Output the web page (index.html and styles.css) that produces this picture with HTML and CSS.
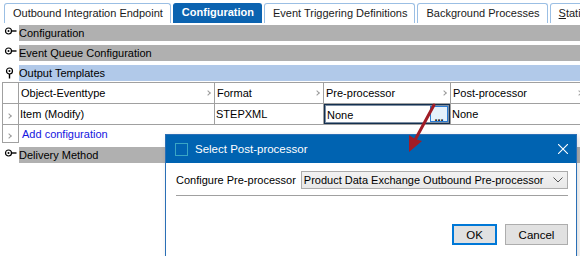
FILE: index.html
```html
<!DOCTYPE html>
<html lang="en">
<head>
    <meta charset="UTF-8">
    <title>Outbound Integration Endpoint - Configuration</title>
    <link rel="stylesheet" href="styles.css">
</head>
<body>
    <div class="tabs">
        <div class="tab">Outbound Integration Endpoint</div>
        <div class="tab active">Configuration</div>
        <div class="tab">Event Triggering Definitions</div>
        <div class="tab">Background Processes</div>
        <div class="tab"><u>S</u>tatis</div>
    </div>

    <div class="sections">
        <div class="section">
            <svg class="pin" width="19" height="16" viewBox="0 0 19 16"><circle cx="8.5" cy="6" r="3" fill="none" stroke="#000" stroke-width="1.2"/><circle cx="8.5" cy="6" r="1" fill="#000"/><line x1="11.5" y1="6" x2="16.5" y2="6" stroke="#000" stroke-width="1.4"/></svg>
            <div class="bar">Configuration</div>
        </div>
        <div class="section">
            <svg class="pin" width="19" height="16" viewBox="0 0 19 16"><circle cx="8.5" cy="6" r="3" fill="none" stroke="#000" stroke-width="1.2"/><circle cx="8.5" cy="6" r="1" fill="#000"/><line x1="11.5" y1="6" x2="16.5" y2="6" stroke="#000" stroke-width="1.4"/></svg>
            <div class="bar">Event Queue Configuration</div>
        </div>
        <div class="section open">
            <svg class="pin" width="19" height="16" viewBox="0 0 19 16"><circle cx="9.5" cy="6" r="3" fill="none" stroke="#000" stroke-width="1.2"/><circle cx="9.5" cy="6" r="1" fill="#000"/><line x1="9.5" y1="9" x2="9.5" y2="13.5" stroke="#000" stroke-width="1.4"/></svg>
            <div class="bar">Output Templates</div>
        </div>

        <table class="grid">
            <colgroup>
                <col style="width:16px">
                <col style="width:196px">
                <col style="width:109px">
                <col style="width:127px">
                <col>
            </colgroup>
            <tr class="head">
                <th></th>
                <th><div class="cell">Object-Eventtype<span class="chev"></span></div></th>
                <th><div class="cell">Format<span class="chev"></span></div></th>
                <th><div class="cell">Pre-processor<span class="chev"></span></div></th>
                <th><div class="cell">Post-processor<span class="chev"></span></div></th>
            </tr>
            <tr class="row">
                <td class="marker"><span class="chev"></span></td>
                <td>Item (Modify)</td>
                <td>STEPXML</td>
                <td class="editing">
                    <div class="editor">
                        <span>None</span>
                        <button class="dots">...</button>
                    </div>
                </td>
                <td>None</td>
            </tr>
            <tr class="add">
                <td class="marker"><span class="chev"></span></td>
                <td colspan="4"><a href="#" class="link">Add configuration</a></td>
            </tr>
        </table>

        <div class="section">
            <svg class="pin" width="19" height="16" viewBox="0 0 19 16"><circle cx="8.5" cy="6" r="3" fill="none" stroke="#000" stroke-width="1.2"/><circle cx="8.5" cy="6" r="1" fill="#000"/><line x1="11.5" y1="6" x2="16.5" y2="6" stroke="#000" stroke-width="1.4"/></svg>
            <div class="bar">Delivery Method</div>
        </div>
    </div>

    <div class="dialog">
        <div class="dialog-title">
            <span class="win-icon"></span>
            <span class="title-text">Select Post-processor</span>
            <svg class="close" width="10" height="10" viewBox="0 0 10 10"><path d="M0 0 L10 10 M10 0 L0 10" stroke="#fff" stroke-width="1.1"/></svg>
        </div>
        <div class="dialog-body">
            <div class="field">
                <label>Configure Pre-processor</label>
                <div class="combo">
                    <span class="combo-text">Product Data Exchange Outbound Pre-processor</span>
                    <svg class="combo-arrow" width="10" height="6" viewBox="0 0 10 6"><path d="M0.5 0.5 L5 5 L9.5 0.5" fill="none" stroke="#555" stroke-width="1"/></svg>
                </div>
            </div>
            <div class="separator"></div>
            <div class="buttons">
                <button class="btn default">OK</button>
                <button class="btn">Cancel</button>
            </div>
        </div>
    </div>

    <svg class="arrow" width="40" height="56" viewBox="0 0 40 56">
        <line x1="34" y1="5" x2="15" y2="40" stroke="#a01c26" stroke-width="3" stroke-linecap="round"/>
        <polygon points="9,52 9,35 15,39 22,41" fill="#a01c26"/>
    </svg>
</body>
</html>
```

FILE: styles.css
```css
body {
    margin: 0;
    font-family: "Liberation Sans", Arial, sans-serif;
    font-size: 11px;
    color: #000;
    background: #fff;
    width: 580px;
    height: 256px;
    overflow: hidden;
    position: relative;
}

/* tabs */
.tabs {
    display: flex;
    gap: 2px;
    height: 23px;
    padding: 3px 0 0 4px;
    box-sizing: border-box;
    white-space: nowrap;
    overflow: hidden;
}

.tab {
    border: 1px solid #9bbfe4;
    border-bottom: none;
    border-radius: 3px 3px 0 0;
    padding: 3px 7px 0 8px;
    color: #1a1a1a;
    font-size: 11px;
}

.tab.active {
    background: #0b63b0;
    border-color: #0b63b0;
    color: #fff;
    font-weight: bold;
    padding-top: 2px;
}

/* collapsible sections */
.sections {
    padding-top: 2px;
}

.section {
    display: flex;
    height: 16px;
    margin-bottom: 4px;
}

.section.open {
    margin-bottom: 1px;
}

.pin {
    flex: 0 0 19px;
}

.bar {
    flex: 1;
    background: #b0b0b0;
    line-height: 16px;
    white-space: nowrap;
}

.section.open .bar {
    background: #b1c9e9;
}

/* grid */
.grid {
    border-collapse: collapse;
    table-layout: fixed;
    width: 584px;
    margin-left: 2px;
    margin-bottom: 4px;
}

.grid th,
.grid td {
    border: 1px solid #a0a0a0;
    padding: 0 0 0 1px;
    font-weight: normal;
    text-align: left;
    white-space: nowrap;
}

.grid .head th {
    height: 20px;
    padding-left: 2px;
}

.grid .row td {
    height: 20px;
}

.grid .add td {
    height: 17px;
}

.grid .add td[colspan] {
    border: none;
    border-top: 1px solid #a0a0a0;
    padding-left: 3px;
}

.cell {
    display: flex;
    align-items: center;
    justify-content: space-between;
    padding-right: 4px;
}

.chev {
    display: inline-block;
    width: 3px;
    height: 3px;
    border-top: 1.5px solid #9a9a9a;
    border-right: 1.5px solid #9a9a9a;
    transform: rotate(45deg);
}

.marker {
    text-align: center !important;
    padding: 0 3px 0 0 !important;
}

.grid td.editing {
    padding: 0;
}

.editor {
    display: flex;
    align-items: stretch;
    justify-content: space-between;
    height: 20px;
    box-sizing: border-box;
    border: 1px solid #14304f;
    box-shadow: inset 0 0 0 1px #7d8ea3;
    padding: 1px 1px 1px 2px;
}

.editor span {
    line-height: 18px;
}

.dots {
    width: 18px;
    padding: 0;
    border: 1px solid #2b7cd3;
    background: #e5f1fb;
    font-family: "Liberation Sans", Arial, sans-serif;
    font-size: 11px;
    font-weight: bold;
    line-height: 20px;
    color: #000;
}

.link {
    color: #1515e0;
    text-decoration: none;
}

/* dialog */
.dialog {
    position: absolute;
    left: 165px;
    top: 134px;
    width: 412px;
    height: 124px;
    box-sizing: border-box;
    border: 1px solid #2a6fb6;
    background: #fff;
    font-size: 11px;
    box-shadow: 2px 2px 6px rgba(0, 0, 0, 0.15);
}

.dialog-title {
    display: flex;
    align-items: center;
    height: 28px;
    background: #0063b1;
    color: #fff;
    padding: 0 8px 0 9px;
    font-size: 11.5px;
}

.win-icon {
    width: 11px;
    height: 11px;
    border: 1.5px solid #3aa6c4;
    margin-right: 7px;
}

.title-text {
    flex: 1;
}

.dialog-body {
    padding: 8px 8px 0 10px;
}

.field {
    display: flex;
    align-items: center;
    gap: 5px;
    white-space: nowrap;
}

.combo {
    flex: 1;
    display: flex;
    align-items: center;
    height: 18px;
    box-sizing: border-box;
    border: 1px solid #acacac;
    background: linear-gradient(#f2f2f2, #e8e8e8);
    padding: 0 4px 0 2px;
}

.combo-text {
    flex: 1;
}

.separator {
    margin-top: 6px;
    height: 1px;
    background: #a0a0a0;
    border-bottom: 1px solid #fff;
}

.buttons {
    display: flex;
    justify-content: flex-end;
    gap: 8px;
    margin-top: 27px;
}

.btn {
    height: 21px;
    box-sizing: border-box;
    border: 1px solid #adadad;
    background: #e1e1e1;
    font-family: "Liberation Sans", Arial, sans-serif;
    font-size: 11.5px;
    color: #000;
    width: 63px;
    padding: 0;
}

.btn.default {
    width: 45px;
    border: 2px solid #0078d7;
}

.arrow {
    position: absolute;
    left: 400px;
    top: 100px;
}
```
